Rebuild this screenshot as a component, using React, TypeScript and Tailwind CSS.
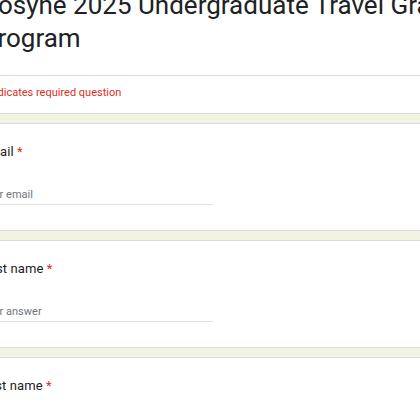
const roboto = { fontFamily: 'Roboto, "Liberation Sans", Arial, sans-serif' };

function Question({ label, placeholder }: { label: string; placeholder: string }) {
  return (
    <div className="bg-white border border-[#dadce0] rounded-[6px] pt-[18px] pb-[25px] px-[19px]">
      <div className="text-[13px] leading-[20px] text-[#202124] tracking-[0.1px]">
        {label} <span className="text-[#d93025]">*</span>
      </div>
      <div className="mt-[23px] w-[232px] border-b border-[#e0e0e0] text-[11px] leading-[19px] text-[#70757a]">
        {placeholder}
      </div>
    </div>
  );
}

export default function App() {
  return (
    <div className="w-[420px] h-[420px] overflow-hidden bg-[#f2f3e1]" style={roboto}>
      <div className="ml-[-39px] w-[520px] mt-[-40px]">
        <div className="bg-white border border-[#dadce0] rounded-[6px]">
          <div className="px-[19px] pt-[28px] pb-[20px] border-b border-[#dadce0]">
            <h1 className="text-[26px] leading-[33px] text-[#202124] font-normal">
              Cosyne 2025 Undergraduate Travel Grant Program
            </h1>
          </div>
          <div className="px-[19px] pt-[9px] pb-[12px] text-[11px] leading-[16px] text-[#d93025]">
            * Indicates required question
          </div>
        </div>
        <div className="flex flex-col gap-[9px] mt-[9px]">
          <Question label="Email" placeholder="Your email" />
          <Question label="First name" placeholder="Your answer" />
          <Question label="Last name" placeholder="Your answer" />
        </div>
      </div>
    </div>
  );
}
